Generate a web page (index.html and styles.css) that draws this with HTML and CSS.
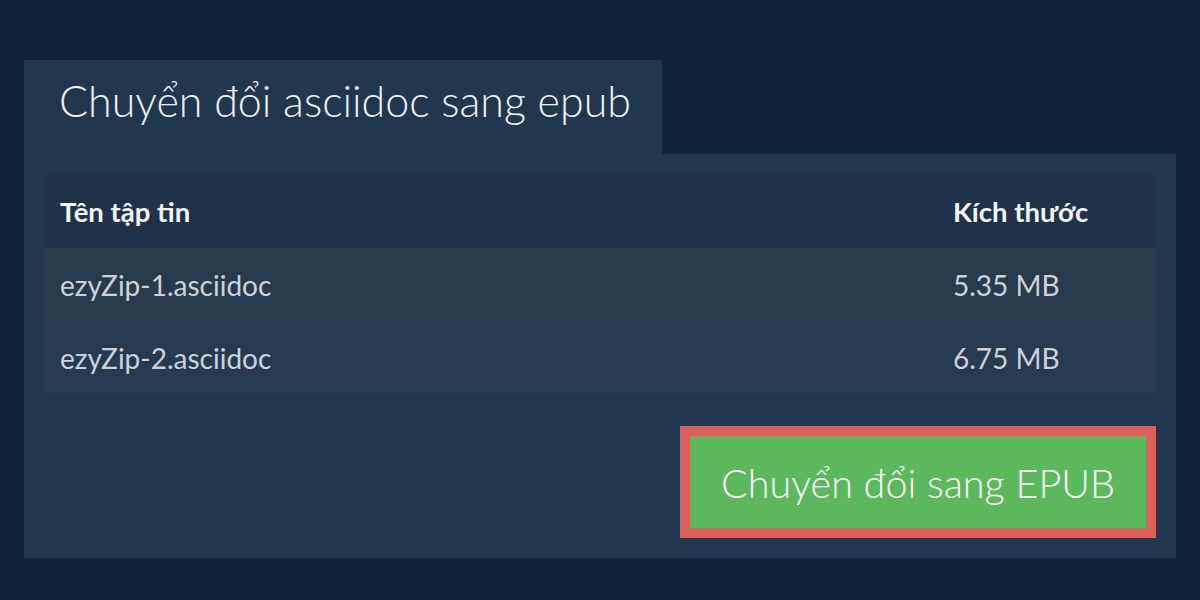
FILE: index.html
```html
<!DOCTYPE html>
<html lang="vi">
<head>
<meta charset="utf-8">
<link rel="stylesheet" href="styles.css">
</head>
<body>
<div class="wrap">
  <div class="tab"><h1 class="title">Chuyển đổi asciidoc sang epub</h1></div>
  <div class="card">
    <table class="files">
      <thead>
        <tr><th class="c-name">Tên tập tin</th><th class="c-size">Kích thước</th></tr>
      </thead>
      <tbody>
        <tr class="odd"><td class="c-name">ezyZip-1.asciidoc</td><td class="c-size">5.35 MB</td></tr>
        <tr class="even"><td class="c-name">ezyZip-2.asciidoc</td><td class="c-size">6.75 MB</td></tr>
      </tbody>
    </table>
    <div class="actions">
      <button class="convert">Chuyển đổi sang EPUB</button>
    </div>
  </div>
</div>
</body>
</html>
```
FILE: styles.css
```css
html, body {
  margin: 0;
  padding: 0;
}
body {
  background: #0f2339;
  font-family: Lato, "Noto Sans", sans-serif;
  width: 1200px;
  height: 600px;
  overflow: hidden;
}
.wrap {
  padding: 60px 24px 0 24px;
  display: flex;
  flex-direction: column;
  align-items: flex-start;
}
.tab {
  width: 638px;
  height: 94px;
  background: #21364f;
  box-sizing: border-box;
  padding-left: 35px;
  display: flex;
  align-items: center;
}
.title {
  margin: 0;
  font-size: 43px;
  font-weight: 300;
  color: #eef1f4;
  line-height: 1;
  position: relative;
  top: -7px;
}
.card {
  width: 1152px;
  height: 404px;
  background: #21364f;
  box-sizing: border-box;
  padding: 20px;
  display: flex;
  flex-direction: column;
  align-items: flex-end;
}
.files {
  width: 100%;
  border-collapse: collapse;
  border-spacing: 0;
}
.files th, .files td {
  text-align: left;
  padding: 0 16px;
  font-size: 28px;
}
.files th {
  height: 74px;
  font-weight: 700;
  font-size: 27.5px;
  color: #f2f4f6;
  background: #1f3249;
}
.files td {
  color: #cdd2d8;
  font-weight: 400;
}
.files tr.odd td {
  height: 74px;
  background: #2a3a4d;
}
.files tr.even td {
  height: 72px;
  background: #263a52;
}
.c-size {
  width: 187px;
}
.actions {
  margin-top: 32px;
}
.convert {
  width: 476px;
  height: 112px;
  box-sizing: border-box;
  border: 10px solid #dc5f5c;
  background: #5cb85c;
  color: #ffffff;
  font-family: Lato, "Noto Sans", sans-serif;
  font-size: 39.5px;
  font-weight: 300;
  padding: 0;
  cursor: pointer;
}
```
